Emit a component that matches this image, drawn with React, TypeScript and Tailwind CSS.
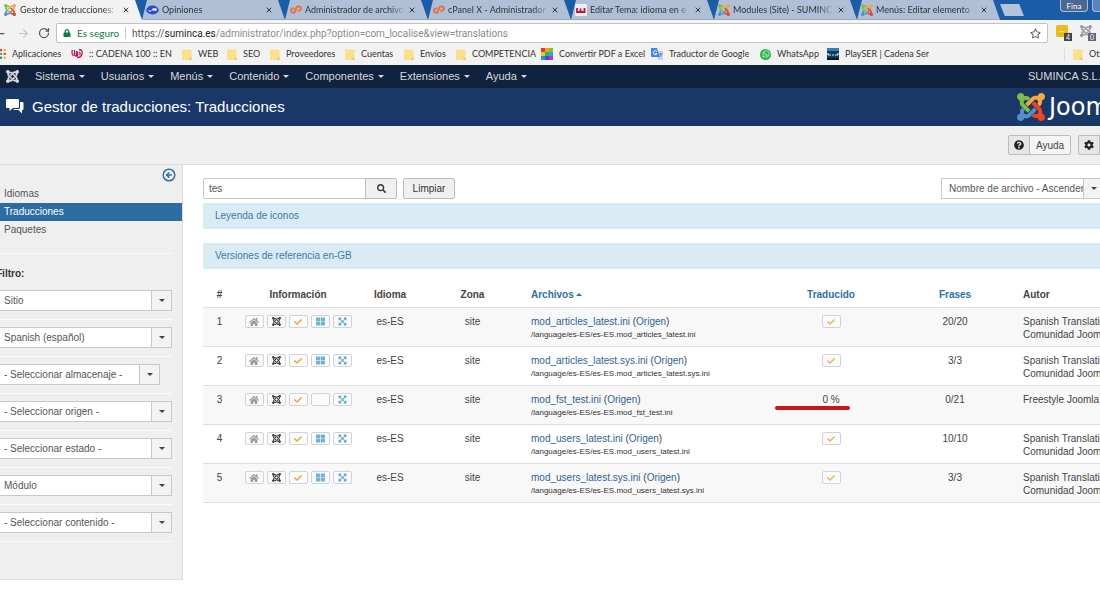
import type { ReactNode } from "react";
import { ArrowLeft, ArrowRight, CircleArrowLeft, RotateCw, X } from "lucide-react";
import {
  FaCheck,
  FaCog,
  FaExpandArrowsAlt,
  FaHome,
  FaLock,
  FaQuestionCircle,
  FaRegStar,
  FaSearch,
  FaThLarge,
  FaWhatsapp,
} from "react-icons/fa";

const JOOMLA_ARM =
  "M.6 92.1C.6 58.8 27.4 32 60.4 32c30 0 54.5 21.9 59.2 50.2 32.6-7.6 67.1.6 96.5 30l-44.3 44.3c-20.5-20.5-42.6-16.3-55.4-3.5-14.3 14.3-14.3 37.9 0 52.2l99.5 99.5-44 44.3c-87.7-87.2-49.7-49.7-99.8-99.7-26.8-26.5-35-64.8-24.8-98.9C20.4 144.6.6 120.7.6 92.1z";

function JoomlaIcon({ className, mono = false }: { className?: string; mono?: boolean }) {
  const fills = mono
    ? ["currentColor", "currentColor", "currentColor", "currentColor"]
    : ["#7ac143", "#f9a541", "#f44321", "#5091cd"];
  return (
    <svg viewBox="0 32 448 448" className={className} aria-hidden="true">
      {fills.map((fill, i) => (
        <path key={i} d={JOOMLA_ARM} fill={fill} transform={`rotate(${i * 90} 224 256)`} />
      ))}
    </svg>
  );
}

function CpanelIcon() {
  return (
    <svg viewBox="0 0 13 12" className="w-[13px] h-3 shrink-0" fill="none" stroke="#e8734a" strokeWidth="2">
      <path d="M5.5 4.5H4a2 2 0 0 0 0 4.2h1.3L8 2.5h1.8a2 2 0 0 1 0 4.2H8.2" />
    </svg>
  );
}

function OpinionesIcon() {
  return (
    <svg viewBox="0 0 13 12" className="w-[13px] h-3 shrink-0">
      <ellipse cx="6.5" cy="6" rx="6.3" ry="4.4" fill="#2a50c8" />
      <path d="M2.500 6.500q1.500 1.500 3 0" fill="none" stroke="#fff" strokeWidth="1" />
      <ellipse cx="8.500" cy="5.500" rx="2.500" ry="1.300" fill="#fff" />
    </svg>
  );
}

function WIcon() {
  return (
    <svg viewBox="0 0 12 12" className="w-3 h-3 shrink-0">
      <rect width="12" height="12" rx="1" fill="#f4ecef" />
      <path d="M2 4v4h3.500V4.500M5.500 8H9.500V4" fill="none" stroke="#c01833" strokeWidth="1.800" />
    </svg>
  );
}

const FolderIcon = () => (
  <svg viewBox="0 0 10 11" className="w-2.5 h-[11px] shrink-0">
    <path d="M0 .5h9.500V11H0z" fill="#fbe08a" />
    <path d="M7.500 8.500h2V11h-2z" fill="#e9c45a" />
  </svg>
);

const AppsIcon = () => (
  <svg viewBox="0 0 10 10" className="w-2.5 h-2.5 shrink-0">
    {["#4285f4", "#db4437", "#f4b400"].map((c, i) => (
      <g key={c}>
        <rect x={i * 3.8} y="0" width="2.200" height="2.200" fill={c} />
        <rect x={i * 3.8} y="3.800" width="2.200" height="2.200" fill={i === 2 ? "#db4437" : "#8a8a8a"} />
        <rect x={i * 3.8} y="7.600" width="2.200" height="2.200" fill={i === 2 ? "#f4b400" : "#0f9d58"} />
      </g>
    ))}
  </svg>
);

const CadenaIcon = () => (
  <svg viewBox="0 0 12 12" className="w-3 h-3 shrink-0" fill="none" stroke="#c2185b" strokeWidth="1.300">
    <path d="M1.500 2Q0 5 2.500 8M3.500 2v4q0 2 2 2V3M6.500 3.500v5M6 9.500q4 .5 5-3.500T8 1.500M8 4q2 1 .5 3" />
  </svg>
);

const RainbowIcon = () => (
  <svg viewBox="0 0 12 12" className="w-3 h-3 shrink-0">
    <path d="M0 0h4v4H0z" fill="#e53935" />
    <path d="M4 0h4v4H4z" fill="#fb9a1c" />
    <path d="M8 0h4v4H8z" fill="#7cc62a" />
    <path d="M0 4h4v4H0z" fill="#f2c70f" />
    <path d="M4 4h4v4H4z" fill="#35b44a" />
    <path d="M8 4h4v4H8z" fill="#1fb0c9" />
    <path d="M0 8h4v4H0z" fill="#2c8fe0" />
    <path d="M4 8h4v4H4z" fill="#3f51d8" />
    <path d="M8 8h4v4H8z" fill="#c52bd6" />
  </svg>
);

const TranslateIcon = () => (
  <svg viewBox="0 0 12 12" className="w-3 h-3 shrink-0">
    <path d="M5 3h7v9H7z" fill="#c9d3e3" />
    <path d="M0 0h6l3 9H1Q0 9 0 8z" fill="#4285f4" />
    <path d="M6 3.500A2 2 0 1 0 6.200 5.500H4.500" fill="none" stroke="#fff" strokeWidth="1" />
    <path d="M8.500 6h3M10 5v1q0 2-1.500 3" fill="none" stroke="#4a6da8" strokeWidth=".8" />
  </svg>
);

const SerIcon = () => (
  <svg viewBox="0 0 12 12" className="w-3 h-3 shrink-0">
    <path d="M0 0h12v12H0z" fill="#123a55" />
    <path d="M0 0h12v3H0z" fill="#2c86b5" />
    <path d="M1 7h3M5 7h2M8 7h3M1 5v2M11 5v2" stroke="#e9eef2" strokeWidth="1.200" />
    <path d="M0 10h12v2H0z" fill="#071a28" />
  </svg>
);

const WhatsIcon = () => (
  <span className="flex w-[11px] h-[11px] items-center justify-center rounded-full bg-[#25b445] text-white shrink-0">
    <FaWhatsapp size={8} />
  </span>
);

const tabs = [
  { title: "Gestor de traducciones:", icon: <JoomlaIcon className="w-3 h-3 shrink-0" /> },
  { title: "Opiniones", icon: <OpinionesIcon /> },
  { title: "Administrador de archivo", icon: <CpanelIcon /> },
  { title: "cPanel X - Administrador", icon: <CpanelIcon /> },
  { title: "Editar Tema: idioma en e", icon: <WIcon /> },
  { title: "Modules (Site) - SUMINC", icon: <JoomlaIcon className="w-3 h-3 shrink-0" /> },
  { title: "Menús: Editar elemento", icon: <JoomlaIcon className="w-3 h-3 shrink-0" /> },
];

const bookmarks: { label: string; icon: ReactNode; width: string }[] = [
  { label: "Aplicaciones", icon: <AppsIcon />, width: "w-[75px]" },
  { label: ":: CADENA 100 :: EN", icon: <CadenaIcon />, width: "w-[111px]" },
  { label: "WEB", icon: <FolderIcon />, width: "w-[45px]" },
  { label: "SEO", icon: <FolderIcon />, width: "w-[43px]" },
  { label: "Proveedores", icon: <FolderIcon />, width: "w-[75px]" },
  { label: "Cuentas", icon: <FolderIcon />, width: "w-[59px]" },
  { label: "Envíos", icon: <FolderIcon />, width: "w-[52px]" },
  { label: "COMPETENCIA", icon: <FolderIcon />, width: "w-[85px]" },
  { label: "Convertir PDF a Excel", icon: <RainbowIcon />, width: "w-[110px]" },
  { label: "Traductor de Google", icon: <TranslateIcon />, width: "w-[109px]" },
  { label: "WhatsApp", icon: <WhatsIcon />, width: "w-[67px]" },
  { label: "PlaySER | Cadena Ser", icon: <SerIcon />, width: "w-[106px]" },
];

const menu = ["Sistema", "Usuarios", "Menús", "Contenido", "Componentes", "Extensiones", "Ayuda"];

const filters = [
  { name: "Zona", value: "Sitio" },
  { name: "Idioma", value: "Spanish (español)" },
  { name: "Almacenaje", value: "- Seleccionar almacenaje -", narrow: true },
  { name: "Origen", value: "- Seleccionar origen -" },
  { name: "Estado", value: "- Seleccionar estado -" },
  { name: "Tipo", value: "Módulo" },
  { name: "Contenido", value: "- Seleccionar contenido -" },
];

const TEAM = ["Spanish Translation", "Comunidad Joomla"];

const rows = [
  { file: "mod_articles_latest.ini", frases: "20/20", author: TEAM, done: true },
  { file: "mod_articles_latest.sys.ini", frases: "3/3", author: TEAM, done: true },
  { file: "mod_fst_test.ini", frases: "0/21", author: ["Freestyle Joomla"], done: false },
  { file: "mod_users_latest.ini", frases: "10/10", author: TEAM, done: true },
  { file: "mod_users_latest.sys.ini", frases: "3/3", author: TEAM, done: true },
];

function Caret({ className = "" }: { className?: string }) {
  return (
    <svg viewBox="0 0 6 3" className={`w-1.5 h-[3px] ${className}`} fill="currentColor" aria-hidden="true">
      <path d="M0 0h6L3 3z" />
    </svg>
  );
}

function Select({ label, value, className = "" }: { label: string; value: string; className?: string }) {
  return (
    <div className={`relative h-[21px] ${className}`}>
      <select
        aria-label={label}
        defaultValue={value}
        className="block w-full h-full appearance-none border border-[#c8c8c8] bg-white pl-[7px] pr-4 text-[10px] text-[#555]"
      >
        <option>{value}</option>
      </select>
      <span className="absolute right-px top-px bottom-px w-5 flex items-center justify-center border-l border-[#c8c8c8] bg-[#f3f3f3] text-[#444] pointer-events-none">
        <Caret />
      </span>
    </div>
  );
}

function MiniButton({ label, className = "", children }: { label: string; className?: string; children?: ReactNode }) {
  return (
    <button
      aria-label={label}
      className={`flex w-[19px] h-[13px] items-center justify-center rounded-xs border border-[#cfd4da] bg-[#fbfbfb] ${className}`}
    >
      {children}
    </button>
  );
}

function Browser() {
  return (
    <div className="font-['Lato','Open_Sans',sans-serif] text-[9px] text-[#333]">
      <div className="flex h-5 items-stretch bg-[#1b5ca8]">
        {tabs.map((t, i) => (
          <div
            key={t.title}
            className={`flex shrink-0 items-center pr-3 pl-1 ${
              i === 0
                ? "w-[142px] gap-1 bg-[#f2f2f2] [clip-path:polygon(0_0,calc(100%-7px)_0,100%_100%,0_100%)]"
                : "w-[143px] gap-[3px] bg-[#aebfd6] border-b border-[#9aaac0] [clip-path:polygon(5px_0,calc(100%-7px)_0,100%_100%,0_100%)]"
            }`}
          >
            {t.icon}
            <span className="flex-1 overflow-hidden whitespace-nowrap [mask-image:linear-gradient(to_right,#000_85%,transparent)]">
              {t.title}
            </span>
            <button aria-label="Cerrar pestaña">
              <X size={8} strokeWidth={3} />
            </button>
          </div>
        ))}
        <button
          aria-label="Nueva pestaña"
          className="mt-1 h-3 w-6 bg-[#b3c4da] [clip-path:polygon(0_0,80%_0,100%_100%,20%_100%)]"
        />
        <button className="ml-auto h-3 w-7 rounded-b-sm border border-t-0 border-[#a9bcd6] bg-[#4a6890] text-[8px] leading-[10px] text-white">
          Fina
        </button>
        <span className="ml-1 h-3 w-2 rounded-bl-sm border-b border-l border-[#a9bcd6] bg-[#5b86bb]" />
      </div>

      <div className="flex h-[26px] items-center bg-[#f2f2f2] text-[#555]">
        <button aria-label="Atrás" className="-ml-2 mr-2.5">
          <ArrowLeft size={15} />
        </button>
        <button aria-label="Adelante" className="mr-2 text-[#c4c4c4]">
          <ArrowRight size={13} />
        </button>
        <button aria-label="Recargar" className="mr-1.5">
          <RotateCw size={12} strokeWidth={2.5} />
        </button>
        <div className="flex h-5 flex-1 items-center rounded-xs border border-[#c3c3c3] bg-white px-1.5 text-[10px]">
          <FaLock size={8} className="text-[#0b8043]" />
          <span className="ml-1.5 text-[#0b8043]">Es seguro</span>
          <span className="mx-1.5 h-3 w-px bg-[#ccc]" />
          <span className="font-['Roboto',sans-serif] text-[#8a8a8a]">
            <span className="text-[#555]">https://</span>
            <span className="text-[#222]">suminca.es</span>
            /administrator/index.php?option=com_localise&amp;view=translations
          </span>
          <FaRegStar size={11} className="ml-auto" />
        </div>
        <div className="relative ml-2 h-4 w-4">
          <span className="block h-3 w-3 rounded-xs bg-[#efb918] text-center text-[8px] leading-[8px] text-white">...</span>
          <span className="absolute right-0 bottom-0 h-2 w-2 bg-[#444] text-center text-[7px] leading-[8px] text-white">4</span>
        </div>
        <div className="relative ml-2 mr-1 h-4 w-4 text-[#9a9aa6]">
          <JoomlaIcon mono className="h-3 w-3" />
          <span className="absolute right-0 bottom-0 h-2 w-2 bg-[#66667a] text-center text-[7px] leading-[8px] text-white">0</span>
        </div>
      </div>

      <div className="flex h-[19px] items-center bg-[#f2f2f2] pb-[3px]">
        <div className="-ml-1 flex flex-1">
          {bookmarks.map((b) => (
            <a key={b.label} href="#" className={`flex shrink-0 items-center gap-1.5 pr-0.5 ${b.width}`}>
              {b.icon}
              <span className="overflow-hidden whitespace-nowrap">{b.label}</span>
            </a>
          ))}
        </div>
        <a href="#" className="flex w-9 items-center gap-1.5 overflow-hidden border-l border-[#ddd] pl-2 whitespace-nowrap">
          <FolderIcon />
          Otros
        </a>
      </div>
    </div>
  );
}

function Header() {
  return (
    <>
      <nav className="flex h-[23px] items-center gap-4 bg-[#10223e] pl-1.5 text-[11px] text-[#d9d9d9]">
        <JoomlaIcon mono className="w-[13px] h-[13px]" />
        {menu.map((m) => (
          <a key={m} href="#" className="flex items-center gap-1">
            {m}
            <Caret />
          </a>
        ))}
        <a href="#" className="ml-auto w-[72px] overflow-hidden whitespace-nowrap">
          SUMINCA S.L.
        </a>
      </nav>
      <header className="flex h-[38px] items-center bg-[#1a3867] pl-1.5 text-white">
        <svg viewBox="0 0 18 16" className="w-[18px] h-4" fill="currentColor" aria-hidden="true">
          <path d="M1 0h11q1 0 1 1v7q0 1-1 1H7l-3.500 3V9H1Q0 9 0 8V1q0-1 1-1z" />
          <path d="M14 3h2.500q1 0 1 1v6q0 1-1 1H16v3.500l-3.500-3.500H8.500q-1 0-1-1H13q1 0 1-1z" />
        </svg>
        <h1 className="ml-2 text-[15px]">Gestor de traducciones: Traducciones</h1>
        <div className="ml-auto flex w-[83px] items-center gap-1 overflow-hidden">
          <JoomlaIcon className="w-7 h-7 shrink-0" />
          <span className="font-['DejaVu_Sans',sans-serif] text-2xl font-normal leading-7">Joomla!</span>
        </div>
      </header>
      <div className="flex h-[39px] items-center justify-end gap-[7px] border-b border-[#ddd] bg-[#efefef] text-[10px] text-[#444]">
        <button className="flex h-5 items-stretch rounded-xs border border-[#bbb] bg-[#f5f5f5]">
          <span className="flex w-[21px] items-center justify-center border-r border-[#bbb] bg-[#e6e6e6] text-[#222]">
            <FaQuestionCircle size={10} />
          </span>
          <span className="w-10 self-center">Ayuda</span>
        </button>
        <button aria-label="Opciones" className="flex h-5 w-[22px] items-center justify-center rounded-l-xs border border-[#bbb] bg-[#e6e6e6] text-[#222]">
          <FaCog size={10} />
        </button>
      </div>
    </>
  );
}

function Sidebar() {
  return (
    <aside className="w-[183px] shrink-0 self-start border-r border-b border-[#ddd] bg-[#efefef] pb-[30px]">
      <div className="flex h-5 items-start justify-end pt-[3px] pr-1.5">
        <button aria-label="Ocultar barra lateral" className="text-[#2f6fa8]">
          <CircleArrowLeft size={14} strokeWidth={2.5} />
        </button>
      </div>
      <ul className="leading-[18px] text-[#555]">
        <li className="pl-1"><a href="#">Idiomas</a></li>
        <li className="bg-[#2d6ca2] pl-1 text-white"><a href="#">Traducciones</a></li>
        <li className="pl-1"><a href="#">Paquetes</a></li>
      </ul>
      <hr className="mt-3.5 mr-2.5 border-[#fafafa]" />
      <h4 className="mt-3 -ml-1 font-bold leading-[15px] text-[#333]">Filtro:</h4>
      <div className="-ml-1 mt-[9px] pr-2.5">
        {filters.map((f) => (
          <div key={f.name} className="mb-[7px] border-b border-[#fafafa] pb-2">
            <Select label={f.name} value={f.value} className={f.narrow ? "mr-3" : ""} />
          </div>
        ))}
      </div>
    </aside>
  );
}

function FileTable() {
  return (
    <table className="mt-[13px] w-full table-fixed border-b border-[#ddd] leading-[13px]">
      <thead>
        <tr className="text-center [&>th]:py-1.5 [&>th]:font-bold">
          <th className="w-[33px]">#</th>
          <th className="w-[124px]">Información</th>
          <th className="w-[60px]">Idioma</th>
          <th className="w-[105px]">Zona</th>
          <th className="pl-1.5 text-left">
            <a href="#" className="inline-flex items-center gap-0.5 text-[#2f6fa8]">
              Archivos <Caret className="rotate-180" />
            </a>
          </th>
          <th className="w-[124px]"><a href="#" className="text-[#2f6fa8]">Traducido</a></th>
          <th className="w-[124px]"><a href="#" className="text-[#2f6fa8]">Frases</a></th>
          <th className="w-[163px] pl-1.5 text-left">Autor</th>
        </tr>
      </thead>
      <tbody>
        {rows.map((r, i) => (
          <tr
            key={r.file}
            className="border-t border-[#ddd] text-center align-top odd:bg-[#f8f8f8] [&>td]:pt-[7px] [&>td]:pb-[5px]"
          >
            <td>{i + 1}</td>
            <td>
              <div className="flex justify-center gap-[3px]">
                <MiniButton label="Inicio" className="text-[#999]"><FaHome size={10} /></MiniButton>
                <MiniButton label="Joomla" className="text-[#444]"><JoomlaIcon mono className="w-[9px] h-[9px]" /></MiniButton>
                <MiniButton label="Publicado" className="text-[#f0a63c]"><FaCheck size={8} /></MiniButton>
                <MiniButton label="Referencia">{r.done && <FaThLarge size={9} className="text-[#74b2d4]" />}</MiniButton>
                <MiniButton label="Ampliar" className="text-[#5aa5cc]"><FaExpandArrowsAlt size={9} /></MiniButton>
              </div>
            </td>
            <td>es-ES</td>
            <td>site</td>
            <td className="pl-1.5 text-left">
              <a href="#" className="text-[#2f6396]">{r.file}</a>{" "}
              (<a href="#" className="text-[#2f6396]">Origen</a>)
              <div className="text-[8px] leading-[13px] text-[#333]">/language/es-ES/es-ES.{r.file}</div>
            </td>
            <td>
              {r.done ? (
                <MiniButton label="Traducido" className="mx-auto text-[#f0b45c]"><FaCheck size={8} /></MiniButton>
              ) : (
                <div className="relative">
                  0 %
                  {/* hand-drawn underline over the cell */}
                  <span className="absolute left-1.5 top-[13px] h-1 w-[75px] rounded-full bg-[#c8161d]" />
                </div>
              )}
            </td>
            <td>{r.frases}</td>
            <td className="pl-1.5 text-left whitespace-nowrap">
              {r.author.map((a) => (
                <div key={a}>{a}</div>
              ))}
            </td>
          </tr>
        ))}
      </tbody>
    </table>
  );
}

export default function App() {
  return (
    <div className="min-h-screen overflow-hidden bg-white font-['Liberation_Sans',Arial,sans-serif] text-[10px] text-[#444]">
      <Browser />
      <Header />
      <div className="flex">
        <Sidebar />
        <main className="-mr-20 min-w-0 flex-1 pl-5 pt-[13px]">
          <div className="flex">
            <input
              aria-label="Buscar"
              defaultValue="tes"
              className="h-[21px] w-[163px] rounded-l-xs border border-[#c8c8c8] bg-white px-[5px] text-[#555]"
            />
            <button aria-label="Buscar archivos" className="-ml-px flex h-[21px] w-8 items-center justify-center rounded-r-xs border border-[#bbb] bg-[#f0f0f0] text-[#333]">
              <FaSearch size={9} />
            </button>
            <button className="ml-1.5 h-[21px] w-[52px] rounded-xs border border-[#bbb] bg-[#f0f0f0] text-[#333]">Limpiar</button>
            <Select label="Ordenar por" value="Nombre de archivo - Ascendente" className="ml-auto mr-[76px] w-[163px]" />
          </div>
          <section className="mt-1 rounded-xs bg-[#d9ebf5] px-3 leading-[26px]">
            <a href="#" className="text-[#3e79ac]">Leyenda de iconos</a>
          </section>
          <section className="mt-3.5 rounded-xs bg-[#d9ebf5] px-3 leading-[26px]">
            <a href="#" className="text-[#3e79ac]">Versiones de referencia en-GB</a>
          </section>
          <FileTable />
        </main>
      </div>
    </div>
  );
}
